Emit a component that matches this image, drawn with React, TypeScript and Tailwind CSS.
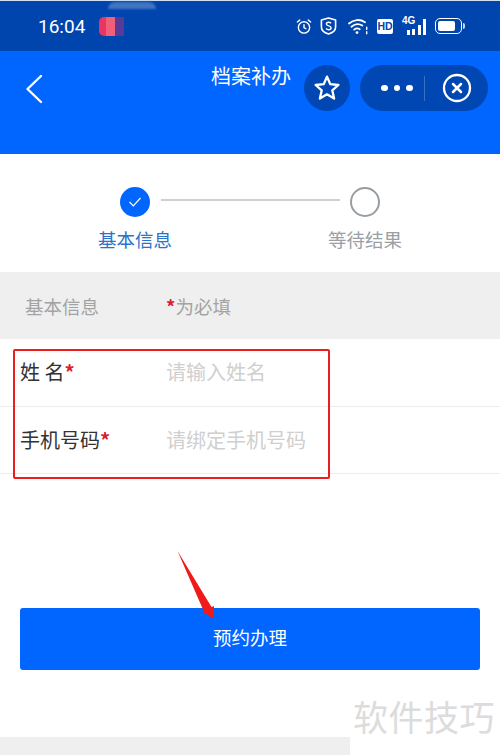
const font = { fontFamily: '"Noto Sans CJK SC", "Noto Sans", sans-serif' };

function StatusIcons() {
    return (
        <div className="ml-auto mr-[35px] flex items-center text-white">
            {/* 闹钟 */}
            <svg width="16" height="17" viewBox="0 0 17 17" fill="none" stroke="currentColor" strokeWidth="1.5" className="mt-[1px]">
                <circle cx="8.5" cy="9.5" r="6" />
                <path d="M8.5 6.5v3.2l2 1.2M1.5 3.8 4 1.6M15.5 3.8 13 1.6" strokeLinecap="round" />
            </svg>
            {/* 盾牌 */}
            <svg width="17" height="18" viewBox="0 0 17 18" fill="none" stroke="currentColor" className="ml-[8px]">
                <path d="M8.5 1 15.6 3v7c0 3.4-3.2 5.8-7.1 7C4.6 15.8 1.4 13.4 1.4 10V3Z" strokeWidth="1.6" strokeLinejoin="round" />
                <path d="M11 6.3c-.6-.8-1.5-1-2.4-1-1.2 0-2.2.6-2.2 1.8 0 2.4 4.7 1.3 4.7 3.7 0 1.2-1.1 1.9-2.4 1.9-1 0-2-.4-2.6-1.2" strokeWidth="1.4" />
            </svg>
            {/* WiFi */}
            <svg width="21" height="17" viewBox="0 0 21 17" fill="none" stroke="currentColor" strokeWidth="1.8" strokeLinecap="round" className="ml-[11px]">
                <path d="M1 5.5C5.5 1.5 12 .7 17 4.3M3.5 8.7C6.8 5.8 11 5.5 14.3 7.6M6.2 11.6c1.8-1.5 3.8-1.5 5.5-.4" />
                <circle cx="9" cy="14.6" r="1.4" fill="currentColor" stroke="none" />
                <path d="M18.7 9.2v2.2M18.7 13.6v2.2" strokeWidth="1.4" />
            </svg>
            {/* HD */}
            <span className="ml-[8px] flex h-[15px] w-[16px] items-center justify-center rounded-[2px] bg-white text-[10.5px] font-bold leading-none text-[#0044ae]" style={{ fontFamily: '"Liberation Sans", sans-serif' }}>
                HD
            </span>
            {/* 4G 信号 */}
            <div className="relative ml-[9px] flex h-[18px] w-[24px] items-end justify-end gap-[2.5px]">
                <span className="absolute left-0 top-[-1px] text-[10px] font-bold leading-none" style={{ fontFamily: '"Liberation Sans", sans-serif' }}>
                    4G
                </span>
                <span className="h-[5px] w-[3px] bg-white" />
                <span className="h-[6px] w-[3px] bg-white" />
                <span className="h-[10px] w-[3px] bg-white" />
                <span className="h-[16px] w-[3px] bg-white" />
            </div>
            {/* 电池 */}
            <div className="ml-[9px] flex items-center">
                <div className="flex h-[16px] w-[27px] items-center rounded-[5px] border-[1.5px] border-white p-[2px]">
                    <div className="h-full w-[17px] rounded-[2px] bg-white" />
                </div>
                <div className="ml-[1px] h-[6px] w-[2px] rounded-r-sm bg-white/80" />
            </div>
        </div>
    );
}

export default function App() {
    return (
        <div className="relative h-[755px] w-[500px] overflow-hidden bg-white" style={font}>
            {/* 状态栏 */}
            <div className="relative flex h-[51px] items-center border-t border-[#cfe0f5] bg-[#0044ae] pl-[38px]">
                <span className="text-[19px] leading-none text-white" style={{ fontFamily: 'Roboto, sans-serif' }}>16:04</span>
                <div className="ml-[14px] flex h-[19px] w-[25px] overflow-hidden rounded-l-[5px] blur-[0.6px]">
                    <div className="w-[7px] bg-[#e8365f]" />
                    <div className="w-[9px] bg-[#f25f78]" />
                    <div className="w-[9px] bg-[#5a3a98]" />
                </div>
                <div className="absolute left-[108px] top-[1px] h-[7px] w-[48px] rounded-t-full bg-[#3f75c2] blur-[1px]" />
                <StatusIcons />
            </div>

            {/* 导航栏 */}
            <div className="relative h-[103px] bg-[#0066ff]">
                <svg width="18" height="30" viewBox="0 0 18 30" fill="none" stroke="white" strokeWidth="2.4" strokeLinecap="round" strokeLinejoin="round" className="absolute left-[25px] top-[23px]">
                    <path d="M16 2 2.5 15 16 28" />
                </svg>
                <span className="absolute left-[211px] top-[11px] text-[20px] leading-[28px] text-white">档案补办</span>
                <div className="absolute left-[304px] top-[14px] flex h-[46px] w-[46px] items-center justify-center rounded-full bg-[#0047b3]">
                    <svg width="28" height="28" viewBox="0 0 28 28" fill="none" stroke="white" strokeWidth="2.3" strokeLinejoin="round">
                        <path d="M14 2.6 17.3 10.2 25.4 11 19.3 16.4 21.1 24.6 14 20.3 6.9 24.6 8.7 16.4 2.6 11 10.7 10.2Z" />
                    </svg>
                </div>
                <div className="absolute left-[360px] top-[14px] flex h-[46px] w-[128px] items-center rounded-full bg-[#0047b3]">
                    <div className="ml-[21px] flex gap-[6px]">
                        <span className="h-[6.5px] w-[6.5px] rounded-full bg-white" />
                        <span className="h-[6.5px] w-[6.5px] rounded-full bg-white" />
                        <span className="h-[6.5px] w-[6.5px] rounded-full bg-white" />
                    </div>
                    <div className="ml-[11px] h-[25px] w-px bg-[#3a70c4]" />
                    <svg width="30" height="30" viewBox="0 0 30 30" fill="none" stroke="white" className="ml-[17px]">
                        <circle cx="15" cy="15" r="13" strokeWidth="2.3" />
                        <path d="M11 11l8 8M19 11l-8 8" strokeWidth="2.5" strokeLinecap="round" />
                    </svg>
                </div>
            </div>

            {/* 步骤条 */}
            <div className="h-[118px] pt-[33px]">
                <div className="flex items-center pl-[120px]">
                    <div className="flex h-[30px] w-[30px] items-center justify-center rounded-full bg-[#0066ff]">
                        <svg width="14" height="12" viewBox="0 0 14 12" fill="none" stroke="white" strokeWidth="1.2">
                            <path d="M1.5 6 5.3 9.8 12.5 2" />
                        </svg>
                    </div>
                    <div className="-mt-[4px] ml-[11px] h-[2px] w-[179px] bg-[#cdd0d3]" />
                    <div className="ml-[10px] h-[30px] w-[30px] rounded-full border-2 border-[#979da3]" />
                </div>
                <div className="mt-[8px] flex pl-[98px] text-[18.5px] leading-[28px]">
                    <span className="text-[#2a73c9]">基本信息</span>
                    <span className="ml-[156px] text-[#9aa0a5]">等待结果</span>
                </div>
            </div>

            {/* 分组标题 */}
            <div className="flex h-[67px] items-center bg-[#efefef] pl-[25px] pt-[2px] text-[18.5px] text-[#a3a3a3]">
                <span>基本信息</span>
                <span className="ml-[67px]"><span className="font-bold text-[#d6202a]">*</span>为必填</span>
            </div>

            {/* 表单 */}
            <div className="flex h-[68px] items-center border-b border-[#ececec] pb-[2px] pl-[20px] text-[20px]">
                <span className="w-[146px] text-[#333]">姓 名<span className="font-bold text-[#d6202a]">*</span></span>
                <span className="text-[#cfcfcf]">请输入姓名</span>
            </div>
            <div className="flex h-[67px] items-center border-b border-[#ececec] pl-[20px] text-[20px]">
                <span className="w-[146px] text-[#333]">手机号码<span className="font-bold text-[#d6202a]">*</span></span>
                <span className="text-[#cfcfcf]">请绑定手机号码</span>
            </div>

            {/* 按钮 */}
            <div className="mx-[20px] mt-[134px] flex h-[62px] items-center justify-center rounded-[3px] bg-[#0066ff] pb-[3px] text-[18.5px] text-white">
                预约办理
            </div>

            {/* 水印 */}
            <div className="mt-[27px] flex h-[58px] items-end">
                <div className="h-[18px] w-[350px] bg-[#efefef]" />
                <span className="mb-[18px] ml-[3px] whitespace-nowrap text-[35px] leading-[42px] tracking-[0.5px] text-[#dcdcdc]">软件技巧</span>
            </div>

            {/* 红框标注 */}
            <div className="absolute left-[13px] top-[349px] h-[130px] w-[317px] rounded-[2px] border-2 border-[#ee1c1c]" />
            <svg width="50" height="75" viewBox="0 0 50 75" className="absolute left-[170px] top-[545px]">
                <path d="M7.5 6 41.5 62 44 61 44 74 33 67 33 64.5Z" fill="#f01a1a" />
            </svg>
        </div>
    );
}
